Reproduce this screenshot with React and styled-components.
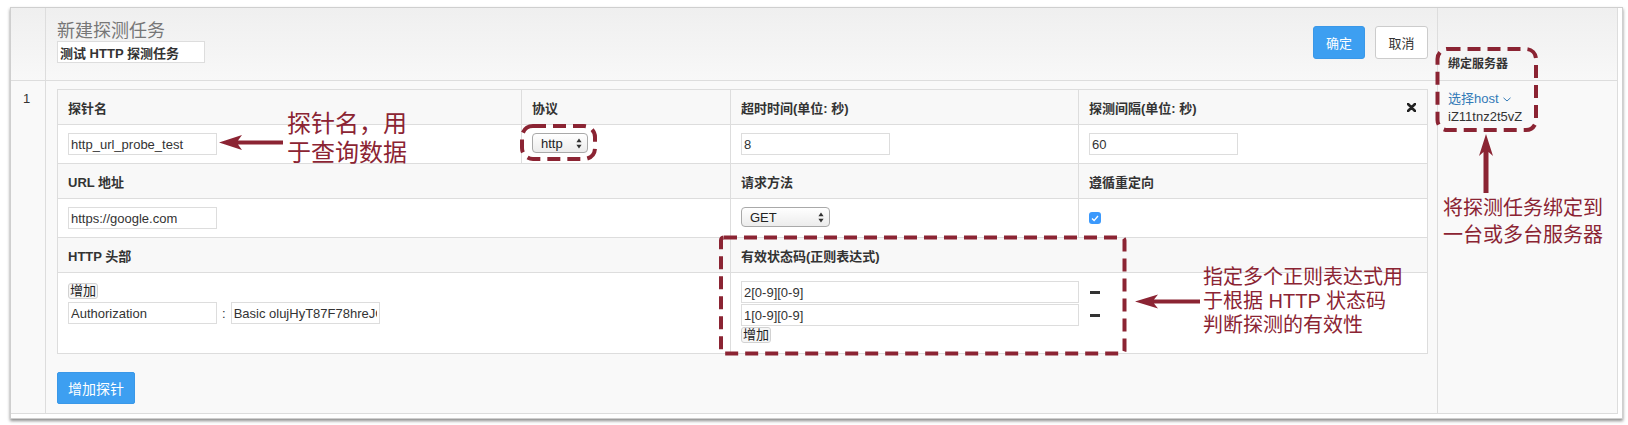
import React from 'react'
import styled, { createGlobalStyle } from 'styled-components'

const GlobalStyle = createGlobalStyle`
  body {
    margin: 0;
    background: #fff;
    color: #333;
    font-family: "Liberation Sans", "Noto Sans CJK SC", sans-serif;
  }
`

const Page = styled.div`
  position: relative;
  width: 1628px;
  height: 425px;
  padding: 7px 0 0 10px;
  box-sizing: border-box;
`

const Frame = styled.div`
  width: 1613px;
  height: 412px;
  box-sizing: border-box;
  border: 1px solid #cfcfcf;
  box-shadow: 0 2px 3px rgba(0, 0, 0, 0.45);
  background: #fff;
  padding: 0 4px 4px 0;
`

const Layout = styled.div`
  display: grid;
  grid-template-columns: 35px 1392px 180px;
  grid-template-rows: 73px 333px;
  background: #f9f9f9;
`

const Cell = styled.div`
  box-sizing: border-box;
  border-right: 1px solid #ddd;
  border-bottom: 1px solid #ddd;
  background: ${p => (p.$head ? 'linear-gradient(#efefef, #f8f8f8)' : '#f9f9f9')};
`

const TaskHead = styled(Cell)`
  display: flex;
  justify-content: space-between;
  align-items: flex-start;
  padding: 14px 9px 0 11px;
`

const Title = styled.div`
  font-size: 18px;
  line-height: 19px;
  color: #777;
`

const TextInput = styled.input`
  display: block;
  box-sizing: border-box;
  width: ${p => p.$w || 149}px;
  height: 22px;
  margin: 0;
  padding: 0 2px;
  border: 1px solid #ddd;
  border-radius: 0;
  background: #fff;
  color: #333;
  font-family: inherit;
  font-size: 13px;
  font-weight: ${p => (p.$bold ? 'bold' : 'normal')};
  outline: none;
`

const NameInput = styled(TextInput)`
  margin-top: 0;
`

const Buttons = styled.div`
  display: flex;
  gap: 10px;
  margin-top: 4px;
`

const Button = styled.button`
  box-sizing: border-box;
  width: ${p => p.$w || 52}px;
  height: ${p => p.$h || 33}px;
  border-radius: 3px;
  border: 1px solid ${p => (p.$primary ? '#3a98e8' : '#ccc')};
  background: ${p => (p.$primary ? '#3d9ff1' : '#fff')};
  color: ${p => (p.$primary ? '#fff' : '#333')};
  font-family: inherit;
  font-size: ${p => p.$size || 13}px;
  padding: 0;
`

const BindHead = styled(Cell)`
  display: flex;
  align-items: flex-end;
  padding: 0 10px 9px 10px;
  font-size: 12px;
  font-weight: bold;
`

const RowNo = styled(Cell)`
  padding: 9px 0 0 12px;
  font-size: 13px;
  line-height: 18px;
`

const TaskBody = styled(Cell)`
  padding: 8px 9px 9px 11px;
`

const BindBody = styled(Cell)`
  padding: 9px 10px 0 10px;
  font-size: 13px;
  line-height: 18px;
`

const HostPicker = styled.div`
  display: flex;
  align-items: center;
  gap: 4px;
  color: #337ab7;
`

const Probe = styled.div`
  display: grid;
  grid-template-columns: 464px 209px 348px 349px;
  grid-template-rows: 35px 39px 35px 39px 35px 81px;
  width: 1371px;
  box-sizing: border-box;
  border-top: 1px solid #ddd;
  border-left: 1px solid #ddd;
`

const Th = styled.div`
  grid-column: span ${p => p.$span || 1};
  box-sizing: border-box;
  display: flex;
  align-items: center;
  justify-content: space-between;
  padding: 0 11px 0 10px;
  background: #f8f8f8;
  border-right: 1px solid #ddd;
  border-bottom: 1px solid #ddd;
  font-size: 13px;
  font-weight: bold;
`

const Td = styled.div`
  grid-column: span ${p => p.$span || 1};
  box-sizing: border-box;
  padding: ${p => p.$top || 8}px 10px 0 10px;
  background: #fff;
  border-right: 1px solid #ddd;
  border-bottom: 1px solid #ddd;
  font-size: 13px;
`

const Select = styled.div`
  box-sizing: border-box;
  display: flex;
  align-items: center;
  justify-content: space-between;
  width: ${p => p.$w}px;
  height: 20px;
  padding: 0 5px 0 8px;
  border: 1px solid #a9a9a9;
  border-radius: 4px;
  background: linear-gradient(#ffffff, #ececec);
  font-size: 13px;
  color: #222;
`

const Checkbox = styled.span`
  display: flex;
  align-items: center;
  justify-content: center;
  width: 12px;
  height: 12px;
  border-radius: 3px;
  background: #3b99fc;
`

const SmallButton = styled.span`
  display: inline-block;
  box-sizing: border-box;
  height: 16px;
  padding: 0 1px;
  border: 1px solid #d2d2d2;
  border-radius: 3px;
  background: #f6f6f6;
  font-size: 13px;
  line-height: 14px;
  color: #222;
`

const HeaderPair = styled.div`
  display: flex;
  align-items: center;
  margin-top: 3px;
`

const Colon = styled.span`
  margin: 0 5px 0 5px;
`

const CodeRow = styled.div`
  display: flex;
  align-items: center;
  gap: 11px;
  margin-bottom: 1px;
`

const Minus = styled.span`
  display: inline-block;
  width: 10px;
  height: 3px;
  background: #333;
`

const AddProbe = styled(Button)`
  display: block;
  margin-top: 18px;
  border-radius: 2px;
`

const Marks = styled.svg`
  position: absolute;
  left: 0;
  top: 0;
  pointer-events: none;
`

const Note = styled.div`
  position: absolute;
  left: ${p => p.$x}px;
  top: ${p => p.$y}px;
  font-size: ${p => p.$size}px;
  line-height: ${p => p.$lh}px;
  color: #8b2433;
  white-space: nowrap;
`

const SelectArrows = () => (
  <svg width="6" height="11" viewBox="0 0 6 11">
    <path d="M3 0.5 L5.6 4.2 L0.4 4.2 Z M3 10.5 L5.6 6.8 L0.4 6.8 Z" fill="#333" />
  </svg>
)

const Close = () => (
  <svg width="9" height="9" viewBox="0 0 9 9">
    <path d="M1 1 L8 8 M8 1 L1 8" stroke="#222" strokeWidth="2.6" strokeLinecap="round" />
  </svg>
)

const red = '#8b2433'

export default function App() {
  return (
    <Page>
      <GlobalStyle />
      <Frame>
        <Layout>
          <Cell $head />
          <TaskHead $head>
            <div>
              <Title>新建探测任务</Title>
              <NameInput $w={148} $bold readOnly value="测试 HTTP 探测任务" />
            </div>
            <Buttons>
              <Button $primary>确定</Button>
              <Button $w={53}>取消</Button>
            </Buttons>
          </TaskHead>
          <BindHead $head>绑定服务器</BindHead>

          <RowNo>1</RowNo>
          <TaskBody>
            <Probe>
              <Th>探针名</Th>
              <Th>协议</Th>
              <Th>超时时间(单位: 秒)</Th>
              <Th>
                探测间隔(单位: 秒)
                <Close />
              </Th>

              <Td><TextInput readOnly value="http_url_probe_test" /></Td>
              <Td>
                <Select $w={56}>http<SelectArrows /></Select>
              </Td>
              <Td><TextInput readOnly value="8" /></Td>
              <Td><TextInput readOnly value="60" /></Td>

              <Th $span={2}>URL 地址</Th>
              <Th>请求方法</Th>
              <Th>遵循重定向</Th>

              <Td $span={2}><TextInput readOnly value="https://google.com" /></Td>
              <Td>
                <Select $w={89}>GET<SelectArrows /></Select>
              </Td>
              <Td $top={13}>
                <Checkbox>
                  <svg width="8" height="7" viewBox="0 0 8 7">
                    <path d="M1 3.6 L3.1 5.6 L7 1" stroke="#fff" strokeWidth="1.4" fill="none" />
                  </svg>
                </Checkbox>
              </Td>

              <Th $span={2}>HTTP 头部</Th>
              <Th $span={2}>有效状态码(正则表达式)</Th>

              <Td $span={2} $top={10}>
                <SmallButton>增加</SmallButton>
                <HeaderPair>
                  <TextInput readOnly value="Authorization" />
                  <Colon>:</Colon>
                  <TextInput readOnly value="Basic olujHyT87F78hreJGs9dKq" />
                </HeaderPair>
              </Td>
              <Td $span={2}>
                <CodeRow>
                  <TextInput $w={338} readOnly value="2[0-9][0-9]" />
                  <Minus />
                </CodeRow>
                <CodeRow>
                  <TextInput $w={338} readOnly value="1[0-9][0-9]" />
                  <Minus />
                </CodeRow>
                <SmallButton>增加</SmallButton>
              </Td>
            </Probe>
            <AddProbe $primary $w={78} $h={32} $size={14}>增加探针</AddProbe>
          </TaskBody>
          <BindBody>
            <HostPicker>
              选择host
              <svg width="8" height="5" viewBox="0 0 8 5">
                <path d="M0.5 0.8 L4 4 L7.5 0.8" stroke="#337ab7" strokeWidth="1" fill="none" />
              </svg>
            </HostPicker>
            <div>iZ11tnz2t5vZ</div>
          </BindBody>
        </Layout>
      </Frame>

      <Marks width="1628" height="425" viewBox="0 0 1628 425">
        <g fill="none" stroke={red} strokeWidth="4" strokeDasharray="13 7">
          <rect x="522" y="126" width="73" height="33" rx="11" />
          <rect x="1437.5" y="49" width="98.5" height="81" rx="10" />
          <rect x="721" y="237.5" width="403.5" height="116" rx="3" />
        </g>
        <g fill={red}>
          <path d="M219 142.5 L242 135 L238 140.5 L283 140.5 L283 144.5 L238 144.5 L242 150 Z" />
          <path d="M1486 134 L1493 156 L1488.5 152 L1488.5 193 L1483.5 193 L1483.5 152 L1479 156 Z" />
          <path d="M1135 301.5 L1158 294.5 L1154 299.5 L1200 299.5 L1200 303.5 L1154 303.5 L1158 308.5 Z" />
        </g>
      </Marks>

      <Note $x={287} $y={109} $size={24} $lh={29}>
        探针名，用<br />于查询数据
      </Note>
      <Note $x={1443} $y={195} $size={20} $lh={27}>
        将探测任务绑定到<br />一台或多台服务器
      </Note>
      <Note $x={1203} $y={265} $size={20} $lh={24}>
        指定多个正则表达式用<br />于根据 HTTP 状态码<br />判断探测的有效性
      </Note>
    </Page>
  )
}
